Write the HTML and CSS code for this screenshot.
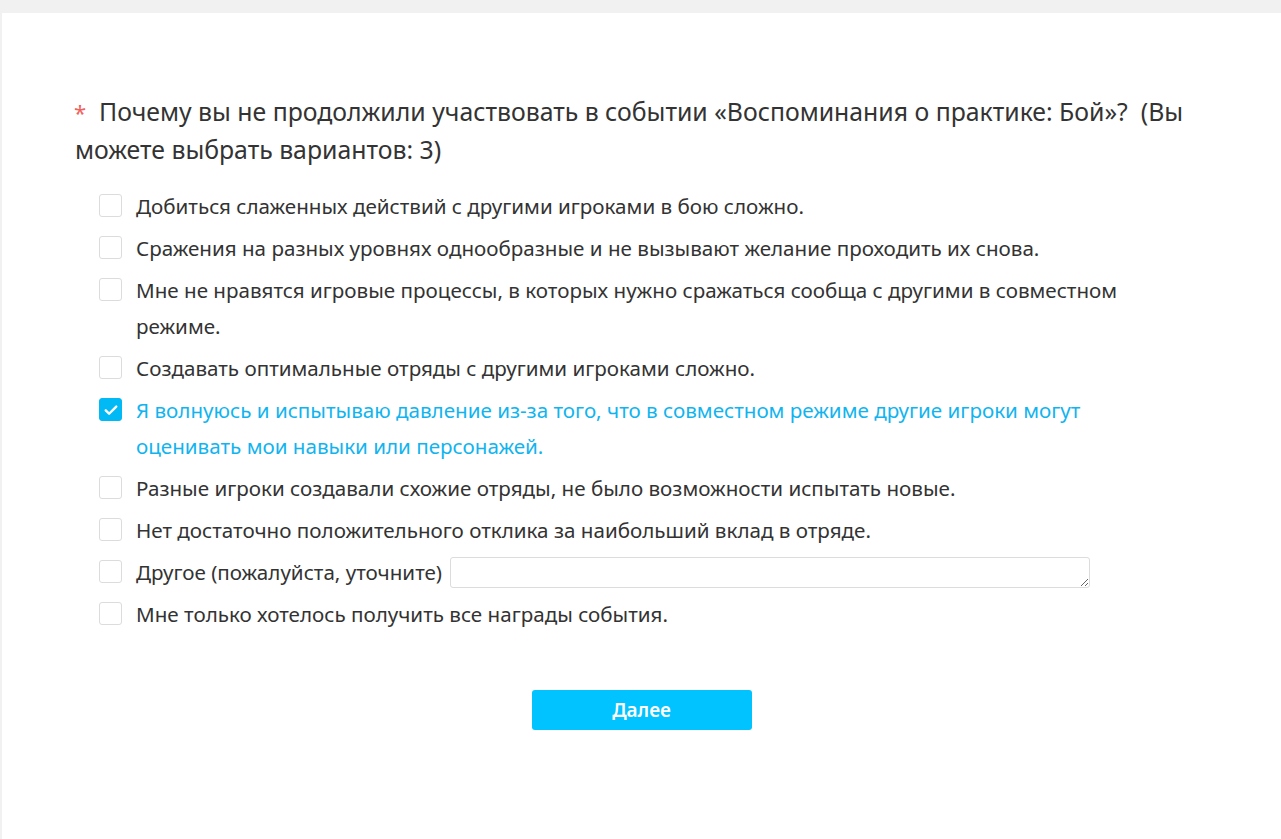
FILE: index.html
```html
<!DOCTYPE html>
<html lang="ru">
<head>
<meta charset="utf-8">
<title>Опрос</title>
<link rel="stylesheet" href="styles.css">
</head>
<body>
<div class="page">
  <div class="card">
    <div class="content">
      <div class="question required">Почему вы не продолжили участвовать в событии «Воспоминания о практике: Бой»?&nbsp; (Вы можете выбрать вариантов: 3)</div>
      <ul class="options">
        <li class="opt"><span class="box"></span><span class="label">Добиться слаженных действий с другими игроками в бою сложно.</span></li>
        <li class="opt"><span class="box"></span><span class="label">Сражения на разных уровнях однообразные и не вызывают желание проходить их снова.</span></li>
        <li class="opt"><span class="box"></span><span class="label">Мне не нравятся игровые процессы, в которых нужно сражаться сообща с другими в совместном режиме.</span></li>
        <li class="opt"><span class="box"></span><span class="label">Создавать оптимальные отряды с другими игроками сложно.</span></li>
        <li class="opt checked"><span class="box"><svg viewBox="0 0 24 24" width="18" height="18"><path d="M5 12.5l4.5 4.5L19 7.5" fill="none" stroke="#fff" stroke-width="3.2" stroke-linecap="round" stroke-linejoin="round"/></svg></span><span class="label">Я волнуюсь и испытываю давление из-за того, что в совместном режиме другие игроки могут оценивать мои навыки или персонажей.</span></li>
        <li class="opt"><span class="box"></span><span class="label">Разные игроки создавали схожие отряды, не было возможности испытать новые.</span></li>
        <li class="opt"><span class="box"></span><span class="label">Нет достаточно положительного отклика за наибольший вклад в отряде.</span></li>
        <li class="opt"><span class="box"></span><span class="label">Другое (пожалуйста, уточните)</span><textarea class="other"></textarea></li>
        <li class="opt"><span class="box"></span><span class="label">Мне только хотелось получить все награды события.</span></li>
      </ul>
    </div>
    <div class="actions">
      <button class="next">Далее</button>
    </div>
  </div>
</div>
</body>
</html>
```

FILE: styles.css
```css
html, body {
  margin: 0;
  padding: 0;
  background: #f1f1f1;
  font-family: "Noto Sans", "Open Sans", sans-serif;
  color: #333;
}
.page {
  padding: 13px 0 0 2px;
}
.card {
  background: #fff;
  min-height: 826px;
  padding-top: 79px;
  box-sizing: border-box;
}
.content {
  padding: 0 60px 0 75px;
}
.question {
  margin-left: -2px;
  font-size: 24.8px;
  line-height: 38px;
  color: #333;
}
.required::before {
  content: "*";
  display: inline-block;
  width: 25px;
  margin-left: -1px;
  color: #f0625d;
  font-size: 22px;
  line-height: 20px;
}
.options {
  list-style: none;
  margin: 20px 0 0 0;
  padding: 0 0 0 22px;
}
.opt {
  display: flex;
  align-items: flex-start;
  margin-bottom: 6px;
  font-size: 20.6px;
  line-height: 36px;
}
.box {
  flex: none;
  width: 21px;
  height: 21px;
  border: 1px solid #dcdcdc;
  border-radius: 3px;
  margin-top: 6px;
  margin-right: 14px;
  display: flex;
  align-items: center;
  justify-content: center;
  background: #fff;
}
.checked .box {
  background: #00b9f5;
  border-color: #00b9f5;
}
.checked .label {
  color: #11b4ef;
}
.label {
  flex: 0 1 auto;
  max-width: 1020px;
}
.opt .other {
  flex: none;
  width: 638px;
  height: 29px;
  margin: 3px 0 0 8px;
  border: 1px solid #dcdcdc;
  border-radius: 3px;
  padding: 0;
  box-sizing: content-box;
}
.actions {
  display: flex;
  justify-content: center;
  margin-top: 58px;
}
.next {
  width: 220px;
  height: 40px;
  border: none;
  border-radius: 3px;
  background: #00c3ff;
  color: #fff;
  font-family: "Noto Sans", sans-serif;
  font-size: 19px;
  font-weight: 600;
}
```
